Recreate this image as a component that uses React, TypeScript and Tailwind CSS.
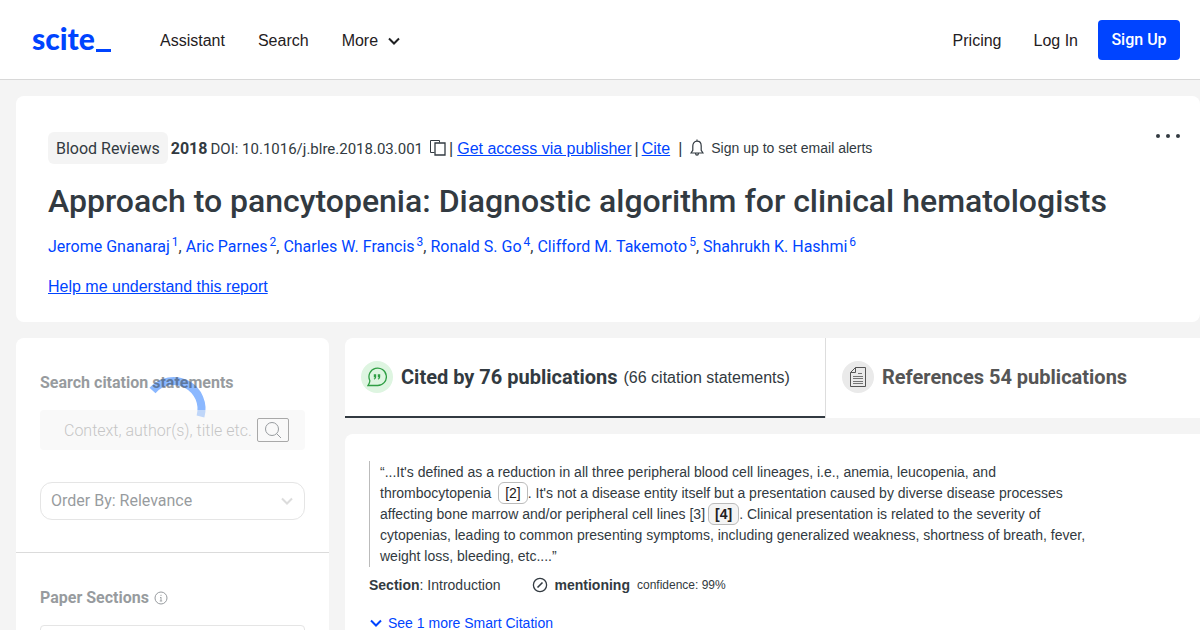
import type { ReactNode } from "react";

const authors = [
  "Jerome Gnanaraj",
  "Aric Parnes",
  "Charles W. Francis",
  "Ronald S. Go",
  "Clifford M. Takemoto",
  "Shahrukh K. Hashmi",
];

function Chevron({ className }: { className: string }) {
  return (
    <svg viewBox="0 0 12 8" fill="none" stroke="currentColor" strokeWidth="2" className={className}>
      <path d="M1 1.5l5 5 5-5" />
    </svg>
  );
}

function Header() {
  return (
    <header className="flex h-20 items-center justify-between border-b border-[#d8d8d8] bg-white pr-5 pl-8 text-[#1f2022]">
      <div className="flex items-center">
        <a href="#" className="flex w-20 items-end font-['Lato'] text-[30px] leading-8 font-black text-[#0044ff]">
          <span className="pb-1">scite</span>
          <span className="mb-[6px] ml-px h-[3px] w-[15px] bg-[#0044ff]" />
        </a>
        <nav className="ml-12 flex items-center gap-[33px] pt-[2px]">
          <a href="#">Assistant</a>
          <a href="#">Search</a>
          <button type="button" className="flex items-center gap-[10px]">
            More
            <Chevron className="h-3 w-3" />
          </button>
        </nav>
      </div>
      <nav className="flex items-center">
        <a href="#" className="pt-[2px]">Pricing</a>
        <a href="#" className="ml-8 pt-[2px]">Log In</a>
        <a
          href="#"
          className="ml-5 flex h-10 w-[82px] items-center justify-center rounded bg-[#0044ff] pt-px font-['Roboto'] font-medium text-white"
        >
          Sign Up
        </a>
      </nav>
    </header>
  );
}

function PaperCard() {
  return (
    <section className="rounded-lg bg-white pt-9 pr-5 pb-[23px] pl-8">
      <div className="flex items-start justify-between">
        <div className="flex h-8 items-center whitespace-nowrap">
          <span className="flex h-8 items-center rounded-md bg-[#f4f4f4] px-2 pt-[2px] font-['Roboto']">Blood Reviews</span>
          <b className="ml-[3px] pt-[2px] font-['Roboto'] font-bold">2018</b>
          <span className="ml-[3px] pt-[2px] font-['Roboto'] text-[15px]">DOI: 10.1016/j.blre.2018.03.001</span>
          <button type="button" aria-label="Copy DOI" className="ml-[6px]">
            <svg viewBox="0 0 18 18" fill="none" stroke="currentColor" className="size-[18px]">
              <path d="M5.5 13.5h-4v-12h9v2" />
              <path d="M6 4h10v12H6z" strokeWidth="1.3" />
            </svg>
          </button>
          <span className="ml-[2px] pt-[2px]">|</span>
          <a href="#" className="ml-1 pt-[2px] text-[#0044ff] underline">Get access via publisher</a>
          <span className="ml-[3px] pt-[2px]">|</span>
          <a href="#" className="ml-[3px] pt-[2px] text-[#0044ff] underline">Cite</a>
          <span className="ml-2 pt-[2px]">|</span>
          <button type="button" className="ml-2 flex items-center gap-[7px] text-sm">
            <svg viewBox="0 0 14 18" fill="none" stroke="currentColor" strokeWidth="1.2" className="h-[18px] w-[14px]">
              <path d="M7 2.2C4.4 2.2 2.8 4.2 2.8 7v4.200L1 14h12l-1.800-2.800V7c0-2.800-1.600-4.800-4.200-4.800zM7 .6v1.600M5.600 14.500c0 1 .6 1.600 1.400 1.600s1.400-.6 1.400-1.600" />
            </svg>
            Sign up to set email alerts
          </button>
        </div>
        <button type="button" aria-label="More options" className="flex h-2 items-center gap-[6px]">
          <span className="size-1 rounded-full bg-[#323a41]" />
          <span className="size-1 rounded-full bg-[#323a41]" />
          <span className="size-1 rounded-full bg-[#323a41]" />
        </button>
      </div>
      <h1 className="mt-4 font-['Roboto'] text-[32px] leading-[42px] font-medium whitespace-nowrap">
        Approach to pancytopenia: Diagnostic algorithm for clinical hematologists
      </h1>
      <p className="mt-[13px] font-['Roboto'] leading-6">
        {authors.map((name, i) => (
          <span key={name}>
            {i > 0 && ", "}
            <a href="#" className="text-[#0044ff]">
              {name}
              <sup className="ml-[2px] text-xs">{i + 1}</sup>
            </a>
          </span>
        ))}
      </p>
      <a href="#" className="mt-4 -mb-px inline-block text-[#0044ff] underline">Help me understand this report</a>
    </section>
  );
}

function Sidebar() {
  return (
    <aside className="relative h-[400px] w-[313px] shrink-0 rounded-lg bg-white">
      <svg viewBox="0 0 64 64" fill="none" stroke="#8bb8ff" strokeWidth="8" className="absolute top-[38px] left-[125px] size-16 overflow-visible">
        <path d="M11.500 14.500A28 28 0 0 1 59.500 40.500" />
      </svg>
      <div className="relative opacity-50">
        <div className="border-b border-[#b8b8b8] px-6 pt-[33px] pb-8">
          <label htmlFor="search" className="block font-['Roboto'] leading-6 font-bold">Search citation statements</label>
          <div className="mt-[15px] flex h-10 items-center rounded bg-[#f4f4f4] pr-4 pl-6">
            <input
              id="search"
              placeholder="Context, author(s), title etc."
              className="min-w-0 flex-1 pt-[2px] font-['Roboto'] font-light outline-none placeholder:text-[#8c8c8c]"
            />
            <button type="button" aria-label="Search" className="flex h-6 w-8 items-center justify-center rounded-xs border border-[#555]">
              <svg viewBox="0 0 18 18" fill="none" stroke="currentColor" className="size-[18px]">
                <circle cx="8" cy="8" r="6.500" />
                <path d="M12.600 12.600l4.400 4.400" />
              </svg>
            </button>
          </div>
          <div className="relative mt-8">
            <select aria-label="Order by" className="h-[38px] w-full appearance-none rounded-xl border border-[#ccc] px-[10px] font-['Roboto']">
              <option>Order By: Relevance</option>
            </select>
            <Chevron className="pointer-events-none absolute top-[13px] right-3 h-3 w-3 text-[#bbb]" />
          </div>
        </div>
        <div className="px-6 pt-[33px]">
          <h2 className="flex items-center gap-[5px] font-['Roboto'] leading-6 font-bold">
            Paper Sections
            <svg viewBox="0 0 14 14" fill="none" stroke="currentColor" className="size-[14px]">
              <circle cx="7" cy="7" r="6" />
              <path d="M7 6v4M7 3.800v1.200M6 6.500h1M5.800 10h2.400" strokeWidth=".9" />
            </svg>
          </h2>
          <div className="mt-[15px] h-20 rounded border border-[#ccc]" />
        </div>
      </div>
    </aside>
  );
}

function Ref({ children, active = false }: { children: ReactNode; active?: boolean }) {
  return (
    <a
      href="#"
      className={
        active
          ? "-my-px ml-[3px] inline-block rounded-md border border-[#bbb] bg-[#f4f4f4] px-[6px] leading-5 font-bold text-[#1f2022]"
          : "-my-px ml-[3px] inline-block rounded-md border border-[#bbb] px-[6px] leading-5 text-[#1f2022]"
      }
    >
      {children}
    </a>
  );
}

function Tabs() {
  return (
    <div className="flex h-20 overflow-hidden rounded-tl-lg bg-white font-['Roboto']">
      <button type="button" className="flex w-[480px] shrink-0 items-center border-b-2 border-[#323a41] px-4">
        <span className="flex size-8 items-center justify-center rounded-full bg-[#def5e1] text-[#2f9e44]">
          <svg viewBox="0 0 20 20" fill="none" stroke="currentColor" strokeWidth="1.300" className="size-5">
            <path d="M1 18.500h9.500a8.700 8.700 0 1 0-7.800-5.200c.4 1 .2 2.200-1.700 5.200z" />
            <g fill="currentColor" stroke="none">
              <path d="M6.800 7.200h2.400v2.500c0 1.500-.7 2.500-2.100 2.900l-.4-.8c.7-.3 1-.8 1.100-1.600h-1z" />
              <path d="M10.800 7.200h2.400v2.500c0 1.500-.7 2.500-2.100 2.900l-.4-.8c.7-.3 1-.8 1.100-1.600h-1z" />
            </g>
          </svg>
        </span>
        <span className="ml-2 text-xl font-bold">Cited by 76 publications</span>
        <span className="ml-[6px] pt-[2px] font-['Liberation_Sans',sans-serif]">(66 citation statements)</span>
      </button>
      <button type="button" className="flex flex-1 items-center border-l border-[#ddd] px-4 pb-[2px] text-[#555]">
        <span className="flex size-8 items-center justify-center rounded-full bg-[#eaeaea]">
          <svg viewBox="0 0 16 20" fill="none" stroke="currentColor" className="h-5 w-4">
            <path d="M5.500.5h10v19H.5v-14zM5.500.5v5h-5" />
            <path d="M8 6.500h4M3 9.500h10M3 11.500h10M3 14.500h10M3 16.500h10" strokeWidth=".8" />
          </svg>
        </span>
        <span className="ml-2 text-xl font-bold">References 54 publications</span>
      </button>
    </div>
  );
}

function Citation() {
  return (
    <article className="mt-4 rounded-tl-lg bg-white px-6 pt-[27px] pb-8 text-sm">
      <blockquote className="max-w-[730px] border-l border-[#bbb] pt-px pl-[10px] leading-[21px]">
        “...It's defined as a reduction in all three peripheral blood cell lineages, i.e., anemia, leucopenia, and
        thrombocytopenia <Ref>[2]</Ref>. It's not a disease entity itself but a presentation caused by diverse disease
        processes affecting bone marrow and/or peripheral cell lines [3]<Ref active>[4]</Ref>. Clinical presentation is
        related to the severity of cytopenias, leading to common presenting symptoms, including generalized weakness,
        shortness of breath, fever, weight loss, bleeding, etc....”
      </blockquote>
      <div className="mt-[6px] flex items-center leading-6">
        <span>
          <b>Section</b>: Introduction
        </span>
        <svg viewBox="0 0 16 16" fill="none" stroke="currentColor" strokeWidth="1.300" className="ml-[31px] size-4">
          <circle cx="8" cy="8" r="6.600" />
          <path d="M5.500 10.500l5-5" strokeWidth="1.600" />
        </svg>
        <b className="ml-[7px]">mentioning</b>
        <span className="ml-[7px] text-xs">confidence: 99%</span>
      </div>
      <button type="button" className="mt-4 flex items-center gap-[6px] pl-[1px] text-[#0044ff]">
        <Chevron className="h-3 w-3" />
        See 1 more Smart Citation
      </button>
    </article>
  );
}

export default function App() {
  return (
    <div className="h-screen overflow-hidden bg-[#f4f4f4] font-['Liberation_Sans',sans-serif] text-base text-[#323a41]">
      <Header />
      <main className="pt-4 pl-4">
        <PaperCard />
        <div className="mt-4 flex gap-4">
          <Sidebar />
          <div className="min-w-0 flex-1">
            <Tabs />
            <Citation />
          </div>
        </div>
      </main>
    </div>
  );
}
